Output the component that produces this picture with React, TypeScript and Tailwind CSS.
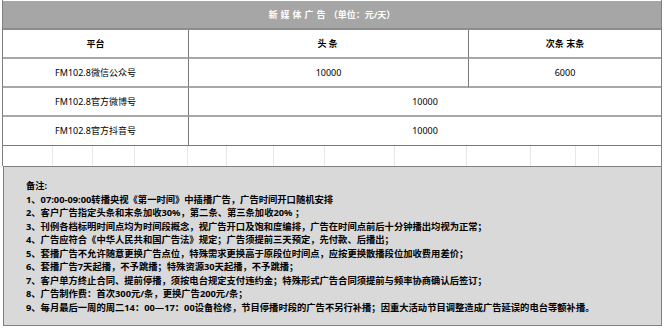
import React from 'react';

const notes = [
  '1、07:00-09:00转播央视《第一时间》中插播广告，广告时间开口随机安排',
  '2、客户广告指定头条和末条加收30%，第二条、第三条加收20% ；',
  '3、刊例各档标明时间点均为时间段概念，视广告开口及饱和度编排，广告在时间点前后十分钟播出均视为正常；',
  '4、广告应符合《中华人民共和国广告法》规定；广告须提前三天预定，先付款、后播出；',
  '5、套播广告不允许随意更换广告点位，特殊需求更换高于原段位时间点，应按更换散播段位加收费用差价；',
  '6、套播广告7天起播，不予跳播；特殊资源30天起播，不予跳播；',
  '7、客户单方终止合同、提前停播，须按电台规定支付违约金；特殊形式广告合同须提前与频率协商确认后签订；',
  '8、广告制作费：首次300元/条，更换广告200元/条；',
  '9、每月最后一周的周二14：00—17：00设备检修，节目停播时段的广告不另行补播；因重大活动节目调整造成广告延误的电台等额补播。',
];

// faint spreadsheet gridlines between table and notes
const gridCols = [50, 40, 42, 53, 39, 47, 51, 71, 72, 64, 45, 23, 62];

export default function App() {
  return (
    <div
      className="w-[667px] h-[330px] bg-white text-black overflow-hidden"
      style={{ fontFamily: '"Noto Sans", "Noto Sans CJK SC", sans-serif' }}
    >
      {/* Table */}
      <div className="ml-[2px] w-[660px] pt-[1px] border-l border-r border-[#808080]">
        <div className="h-[29px] bg-[#a6a6a6] border-b-2 border-[#8c8c8c] flex items-center justify-center text-white font-bold text-[9px]">
          <span className="tracking-[3px]">新媒体广告</span>
          <span>（单位：元/天）</span>
        </div>

        <div className="grid grid-cols-[186px_280px_1fr] text-[9px]">
          <div className="h-[29px] flex items-center justify-center font-bold border-r border-b-2 border-r-[#7a7a7a] border-b-[#a8a8a8]">平台</div>
          <div className="h-[29px] flex items-center justify-center font-bold tracking-[2px] border-r border-b-2 border-r-[#7a7a7a] border-b-[#a8a8a8]">头条</div>
          <div className="h-[29px] flex items-center justify-center font-bold border-b-2 border-b-[#a8a8a8]">次条 末条</div>

          <div className="h-[29px] flex items-center justify-center border-r border-b-2 border-r-[#7a7a7a] border-b-[#a8a8a8]">FM102.8微信公众号</div>
          <div className="h-[29px] flex items-center justify-center border-r border-b-2 border-r-[#7a7a7a] border-b-[#a8a8a8]">10000</div>
          <div className="h-[29px] flex items-center justify-center border-b-2 border-b-[#a8a8a8]">6000</div>

          <div className="h-[29px] flex items-center justify-center border-r border-b-2 border-r-[#7a7a7a] border-b-[#a8a8a8]">FM102.8官方微博号</div>
          <div className="col-span-2 h-[29px] flex items-center justify-center border-b-2 border-b-[#a8a8a8]">10000</div>

          <div className="h-[29px] flex items-center justify-center border-r border-b border-r-[#7a7a7a] border-b-[#7a7a7a]">FM102.8官方抖音号</div>
          <div className="col-span-2 h-[29px] flex items-center justify-center border-b border-b-[#7a7a7a]">10000</div>
        </div>

        <div className="flex h-[20px]">
          {gridCols.map((w, i) => (
            <div
              key={i}
              className={i < gridCols.length - 1 ? 'h-full border-r border-[#e6e6e6]' : 'h-full'}
              style={{ width: w }}
            />
          ))}
        </div>
      </div>

      {/* Notes */}
      <div className="ml-[3px] w-[659px] h-[160px] bg-[#d9d9d9] border border-[#808080] pl-[22px] pt-[12px] text-[9.3px] font-bold leading-[13.5px]">
        <div>备注:</div>
        {notes.map((n, i) => (
          <div key={i} className="whitespace-nowrap">{n}</div>
        ))}
      </div>
    </div>
  );
}
